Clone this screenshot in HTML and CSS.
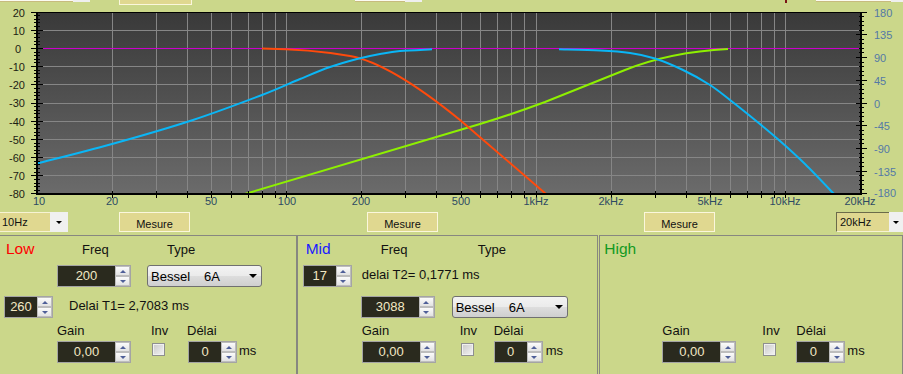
FILE: index.html
```html
<!DOCTYPE html>
<html lang="fr">
<head>
  <meta charset="UTF-8">
  <title>Filtres - courbes</title>
  <link rel="stylesheet" href="styles.css">
</head>
<body>
  <!-- bas des controles de la ligne du dessus (coupes par la fenetre) -->
  <div class="cutoff">
    <div class="cut-combo first"><span class="cut-text"></span><span class="cut-btn"></span></div>
    <div class="cut-button"></div>
    <div class="cut-combo second"><span class="cut-text"></span><span class="cut-btn"></span></div>
    <div class="cut-mark"></div>
    <div class="cut-combo third"><span class="cut-text"></span><span class="cut-btn"></span></div>
  </div>

  <svg class="chart" width="903" height="204" viewBox="0 8 903 204">
    <defs>
      <linearGradient id="plotbg" x1="0" y1="0" x2="0" y2="1">
        <stop offset="0" stop-color="#393939"/>
        <stop offset="1" stop-color="#6b6b6b"/>
      </linearGradient>
    </defs>
    <rect x="37" y="12" width="824" height="182" fill="url(#plotbg)"/>

    <path class="grid" d="M37 30.5H861M37 66.5H861M37 84.5H861M37 103.5H861M37 121.5H861M37 139.5H861M37 157.5H861M37 175.5H861"/>
    <path class="grid" d="M112.5 12V194M156.5 12V194M187.5 12V194M211.5 12V194M231.5 12V194M248.5 12V194M262.5 12V194M275.5 12V194M286.5 12V194M361.5 12V194M405.5 12V194M436.5 12V194M461.5 12V194M480.5 12V194M497.5 12V194M511.5 12V194M524.5 12V194M536.5 12V194M611.5 12V194M655.5 12V194M686.5 12V194M710.5 12V194M730.5 12V194M747.5 12V194M761.5 12V194M774.5 12V194M785.5 12V194"/>
    <path class="zero" d="M37 48.5H861"/>

    <!-- courbes -->
    <path class="curve green" d="M245 194L480 124Q510 115 545 102L625 70Q670 52 728 49"/>
    <path class="curve red" d="M262 48.5Q310 49 350 56T460 120L546 194"/>
    <path class="curve blue" d="M37 163.5C49.5 160.3 86 151.3 112 144C138 136.8 168 128.2 193 120C218 111.8 244.2 101.8 262 95C279.8 88.2 288.7 83.7 300 79C311.3 74.3 320.5 70.3 330 67C339.5 63.7 348.7 61.2 357 59C365.3 56.8 372.8 55.3 380 54C387.2 52.7 391.3 51.8 400 51C408.7 50.2 426.7 49.6 432 49.3"/>
    <path class="curve blue" d="M559 49.3C565.8 49.5 588.2 49.9 600 50.5C611.8 51.1 620.8 51.7 630 53C639.2 54.3 646.2 55.7 655 58.5C663.8 61.3 673.8 65.6 683 70C692.2 74.4 702.2 80 710 85C717.8 90 722.5 94.2 730 100C737.5 105.8 746.7 113.2 755 120C763.3 126.8 771.7 133.7 780 141C788.3 148.3 796 155.2 805 164C814 172.8 829.2 189 834 194"/>

    <!-- axes -->
    <path class="axis" d="M37 12.5H861"/>
    <rect x="36" y="12" width="2" height="183" fill="#000"/>
    <rect x="860" y="12" width="2" height="183" fill="#000"/>
    <rect x="36" y="193" width="826" height="2" fill="#000"/>
    <path class="axis" d="M34 15.5h6M34 19.5h6M34 22.5h6M34 26.5h6M34 33.5h6M34 37.5h6M34 41.5h6M34 44.5h6M34 52.5h6M34 55.5h6M34 59.5h6M34 62.5h6M34 70.5h6M34 73.5h6M34 77.5h6M34 81.5h6M34 88.5h6M34 92.5h6M34 95.5h6M34 99.5h6M34 106.5h6M34 110.5h6M34 113.5h6M34 117.5h6M34 124.5h6M34 128.5h6M34 132.5h6M34 135.5h6M34 143.5h6M34 146.5h6M34 150.5h6M34 153.5h6M34 161.5h6M34 164.5h6M34 168.5h6M34 172.5h6M34 179.5h6M34 183.5h6M34 186.5h6M34 190.5h6"/>
    <path class="axis" d="M31 12.5h12M31 30.5h12M31 48.5h12M31 66.5h12M31 84.5h12M31 103.5h12M31 121.5h12M31 139.5h12M31 157.5h12M31 175.5h12M31 193.5h12"/>
    <path class="axis" d="M859 16.5h5M859 21.5h5M859 25.5h5M859 30.5h5M859 39.5h5M859 43.5h5M859 48.5h5M859 52.5h5M859 62.5h5M859 66.5h5M859 71.5h5M859 75.5h5M859 84.5h5M859 89.5h5M859 93.5h5M859 98.5h5M859 107.5h5M859 112.5h5M859 116.5h5M859 121.5h5M859 130.5h5M859 134.5h5M859 139.5h5M859 143.5h5M859 153.5h5M859 157.5h5M859 162.5h5M859 166.5h5M859 175.5h5M859 180.5h5M859 184.5h5M859 189.5h5"/>
    <path class="axis" d="M856 12.5h11M856 34.5h11M856 57.5h11M856 80.5h11M856 103.5h11M856 125.5h11M856 148.5h11M856 171.5h11M856 193.5h11"/>
    <path class="axis" d="M112.5 191V198M156.5 191V198M187.5 191V198M211.5 191V198M231.5 191V198M248.5 191V198M262.5 191V198M275.5 191V198M286.5 191V198M361.5 191V198M405.5 191V198M436.5 191V198M461.5 191V198M480.5 191V198M497.5 191V198M511.5 191V198M524.5 191V198M536.5 191V198M611.5 191V198M655.5 191V198M686.5 191V198M710.5 191V198M730.5 191V198M747.5 191V198M761.5 191V198M774.5 191V198M785.5 191V198"/>

    <!-- graduations dB -->
    <text class="ylab" x="25" y="16.5">20</text>
    <text class="ylab" x="25" y="34.5">10</text>
    <text class="ylab" x="21" y="52.5">0</text>
    <text class="ylab" x="25" y="70.5">-10</text>
    <text class="ylab" x="25" y="89">-20</text>
    <text class="ylab" x="25" y="107">-30</text>
    <text class="ylab" x="25" y="125.5">-40</text>
    <text class="ylab" x="25" y="143.5">-50</text>
    <text class="ylab" x="25" y="161.5">-60</text>
    <text class="ylab" x="25" y="180">-70</text>
    <text class="ylab" x="25" y="197.5">-80</text>

    <!-- graduations phase -->
    <text class="plab" x="874" y="16.5">180</text>
    <text class="plab" x="874" y="39">135</text>
    <text class="plab" x="874" y="62">90</text>
    <text class="plab" x="874" y="84.5">45</text>
    <text class="plab" x="874" y="107.5">0</text>
    <text class="plab" x="874" y="130">-45</text>
    <text class="plab" x="874" y="153">-90</text>
    <text class="plab" x="874" y="175.5">-135</text>
    <text class="plab" x="874" y="197">-180</text>

    <!-- frequences -->
    <text class="xlab" x="39" y="205">10</text>
    <text class="xlab" x="112" y="205">20</text>
    <text class="xlab" x="211" y="205">50</text>
    <text class="xlab" x="287" y="205">100</text>
    <text class="xlab" x="361" y="205">200</text>
    <text class="xlab" x="461" y="205">500</text>
    <text class="xlab" x="536" y="205">1kHz</text>
    <text class="xlab" x="611" y="205">2kHz</text>
    <text class="xlab" x="710" y="205">5kHz</text>
    <text class="xlab" x="785" y="205">10kHz</text>
    <text class="xlab" x="860" y="205">20kHz</text>
  </svg>

  <div class="toolbar">
    <div class="range min"><span class="range-text">10Hz</span><span class="range-btn"></span></div>
    <div class="mesure m1">Mesure</div>
    <div class="mesure m2">Mesure</div>
    <div class="mesure m3">Mesure</div>
    <div class="range max"><span class="range-text">20kHz</span><span class="range-btn"></span></div>
  </div>

  <div class="panels">
    <div class="panel low">
      <div class="row r1">
        <span class="title">Low</span>
        <span>Freq</span>
        <span>Type</span>
      </div>
      <div class="row r2">
        <div class="spin wide"><span class="val">200</span><span class="arrows"><i class="up"></i><i class="down"></i></span></div>
        <div class="select"><span>Bessel</span><span class="order">6A</span></div>
      </div>
      <div class="row r3">
        <div class="spin narrow"><span class="val">260</span><span class="arrows"><i class="up"></i><i class="down"></i></span></div>
        <span class="info">Delai T1= 2,7083 ms</span>
      </div>
      <div class="row r4">
        <span>Gain</span>
        <span>Inv</span>
        <span>Délai</span>
      </div>
      <div class="row r5">
        <div class="spin wide"><span class="val">0,00</span><span class="arrows"><i class="up"></i><i class="down"></i></span></div>
        <span class="check"></span>
        <div class="spin narrow"><span class="val">0</span><span class="arrows"><i class="up"></i><i class="down"></i></span></div>
        <span class="unit">ms</span>
      </div>
    </div>

    <div class="panel mid">
      <div class="row r1">
        <span class="title">Mid</span>
        <span>Freq</span>
        <span>Type</span>
      </div>
      <div class="row r2">
        <div class="spin narrow"><span class="val">17</span><span class="arrows"><i class="up"></i><i class="down"></i></span></div>
        <span class="info">delai T2= 0,1771 ms</span>
      </div>
      <div class="row r3">
        <div class="spin wide"><span class="val">3088</span><span class="arrows"><i class="up"></i><i class="down"></i></span></div>
        <div class="select"><span>Bessel</span><span class="order">6A</span></div>
      </div>
      <div class="row r4">
        <span>Gain</span>
        <span>Inv</span>
        <span>Délai</span>
      </div>
      <div class="row r5">
        <div class="spin wide"><span class="val">0,00</span><span class="arrows"><i class="up"></i><i class="down"></i></span></div>
        <span class="check"></span>
        <div class="spin narrow"><span class="val">0</span><span class="arrows"><i class="up"></i><i class="down"></i></span></div>
        <span class="unit">ms</span>
      </div>
    </div>

    <div class="panel high">
      <div class="row r1">
        <span class="title">High</span>
      </div>
      <div class="row r2"></div>
      <div class="row r3"></div>
      <div class="row r4">
        <span>Gain</span>
        <span>Inv</span>
        <span>Délai</span>
      </div>
      <div class="row r5">
        <div class="spin wide"><span class="val">0,00</span><span class="arrows"><i class="up"></i><i class="down"></i></span></div>
        <span class="check"></span>
        <div class="spin narrow"><span class="val">0</span><span class="arrows"><i class="up"></i><i class="down"></i></span></div>
        <span class="unit">ms</span>
      </div>
    </div>
  </div>
</body>
</html>
```

FILE: styles.css
```css
body {
  margin: 0;
  width: 903px;
  height: 374px;
  overflow: hidden;
  background-color: #cbd78a;
  font-family: 'Liberation Sans', Arial, sans-serif;
  color: #111;
}

/* ligne du dessus, coupee */
.cutoff {
  display: flex;
  align-items: flex-start;
  height: 8px;
}

.cut-combo {
  display: flex;
}

.cut-text {
  height: 1px;
  background-color: #fbfbf2;
  border-bottom: 1px solid #c7bb7e;
}

.cut-btn {
  width: 17px;
  height: 2px;
  background-color: #efefef;
}

.cut-combo.first .cut-text { width: 73px; }
.cut-combo.second { margin-left: 163px; }
.cut-combo.second .cut-text { width: 50px; }
.cut-combo.third { margin-left: 29px; }
.cut-combo.third .cut-text { width: 75px; }
.cut-combo.third .cut-btn { width: 12px; }

.cut-button {
  margin-left: 29px;
  width: 73px;
  height: 5px;
  box-sizing: border-box;
  background-color: #e0d890;
  border: 1px solid #fbf7dc;
  border-top: none;
}

.cut-mark {
  margin-left: 363px;
  width: 2px;
  height: 3px;
  background-color: #7a1414;
}

/* graphique */
.chart {
  display: block;
}

.chart .grid {
  stroke: #868686;
  stroke-width: 1;
  fill: none;
  shape-rendering: crispEdges;
}

.chart .zero {
  stroke: #cc00cc;
  stroke-width: 1;
  shape-rendering: crispEdges;
}

.chart .axis {
  stroke: #000;
  stroke-width: 1;
  fill: none;
  shape-rendering: crispEdges;
}

.chart .curve {
  fill: none;
  stroke-width: 2;
  stroke-linejoin: round;
}

.chart .blue { stroke: #0ab6f6; }
.chart .red { stroke: #ff4a0c; }
.chart .green { stroke: #8ef000; }

.chart text {
  font-family: 'Liberation Sans', Arial, sans-serif;
  font-size: 11px;
}

.chart .ylab {
  fill: #1c1c14;
  text-anchor: end;
}

.chart .plab {
  fill: #5479a6;
}

.chart .xlab {
  fill: #2d4a63;
  text-anchor: middle;
}

/* barre Mesure */
.toolbar {
  display: flex;
  height: 20px;
}

.range {
  display: flex;
  height: 20px;
}

.range-text {
  box-sizing: border-box;
  height: 20px;
  padding-left: 2px;
  background-color: #e0d890;
  border-top: 1px solid #f7f3d3;
  border-bottom: 1px solid #f7f3d3;
  font-size: 11px;
  line-height: 18px;
}

.range-btn {
  width: 18px;
  display: flex;
  align-items: center;
  justify-content: center;
  background-color: #f0f0f0;
}

.range-btn::after {
  content: '';
  border-left: 3px solid transparent;
  border-right: 3px solid transparent;
  border-top: 3px solid #000;
}

.range.min .range-text { width: 50px; }

.range.max {
  margin-left: 121px;
}

.range.max .range-text {
  width: 53px;
  padding-left: 3px;
  border-left: 1px solid #6b6b4a;
  border-top-color: #6b6b4a;
}

.range.max .range-btn { width: 14px; }

.mesure {
  width: 72px;
  height: 20px;
  box-sizing: border-box;
  background-color: #e0d890;
  border: 1px solid #fbf7dc;
  font-size: 11px;
  line-height: 22px;
  text-align: center;
  overflow: hidden;
}

.mesure.m1 { margin-left: 51px; }
.mesure.m2 { margin-left: 177px; }
.mesure.m3 { margin-left: 206px; }

/* panneaux */
.panels {
  display: flex;
  margin-top: 3px;
  margin-left: -1px;
}

.panel {
  box-sizing: border-box;
  height: 150px;
  border: 1px solid #878780;
  border-bottom: none;
  font-size: 13px;
}

.panel.low { width: 299px; }
.panel.mid { width: 303px; }
.panel.high { width: 305px; margin-left: 1px; }

.row {
  display: grid;
  grid-auto-flow: column;
  justify-content: start;
  justify-items: start;
}

.r1 {
  margin-top: 1px;
  height: 24px;
  line-height: 24px;
  align-items: baseline;
}

.r2 { margin-top: 4px; height: 22px; }
.r3 { margin-top: 9px; height: 22px; }

.r4 {
  margin-top: 5px;
  height: 15px;
  line-height: 15px;
}

.r5 { margin-top: 3px; height: 22px; }

.title {
  font-size: 15.5px;
}

.low .title { color: #ff0000; }
.mid .title { color: #1a1aff; }
.high .title { color: #129a22; }

.info {
  line-height: 19px;
}

.unit {
  line-height: 19px;
}

.low .r1 { padding-left: 6px; grid-template-columns: 76px 85px auto; }
.low .r2 { padding-left: 57px; grid-template-columns: 90px auto; }
.low .r3 { padding-left: 4px; grid-template-columns: 65px auto; }
.low .r4 { padding-left: 57px; grid-template-columns: 94px 36px auto; }
.low .r5 { padding-left: 57px; grid-template-columns: 95px 36px 51px auto; }

.mid .r1 { padding-left: 8px; grid-template-columns: 75px 97px auto; }
.mid .r2 { padding-left: 5px; grid-template-columns: 59px auto; }
.mid .r3 { padding-left: 63px; grid-template-columns: 91px auto; }
.mid .r4 { padding-left: 64px; grid-template-columns: 98px 34px auto; }
.mid .r5 { padding-left: 64px; grid-template-columns: 99px 33px 52px auto; }

.high .r1 { padding-left: 4px; }
.high .r4 { padding-left: 62px; grid-template-columns: 100px 34px auto; }
.high .r5 { padding-left: 62px; grid-template-columns: 101px 33px 51px auto; }

/* champs numeriques */
.spin {
  display: flex;
  height: 22px;
  box-sizing: border-box;
  border: 1px solid #a4a4a4;
  background-color: #2a2a1e;
}

.spin.wide { width: 74px; }
.spin.narrow { width: 49px; }

.spin .val {
  flex: 1;
  text-align: center;
  color: #f2e8c4;
  line-height: 20px;
}

.spin .arrows {
  width: 15px;
  display: flex;
  flex-direction: column;
  background-color: #f4f4f4;
}

.spin .arrows i {
  flex: 1;
  display: flex;
  align-items: center;
  justify-content: center;
  border: 1px solid #bdbdbd;
  background: linear-gradient(#fbfbfb, #e2e2e2);
}

.spin .up::after {
  content: '';
  border-left: 3px solid transparent;
  border-right: 3px solid transparent;
  border-bottom: 3px solid #4f5f98;
}

.spin .down::after {
  content: '';
  border-left: 3px solid transparent;
  border-right: 3px solid transparent;
  border-top: 3px solid #4f5f98;
}

/* liste Bessel */
.select {
  display: flex;
  align-items: center;
  width: 115px;
  height: 22px;
  box-sizing: border-box;
  padding-left: 3px;
  border: 1px solid #707070;
  border-radius: 3px;
  background: linear-gradient(#f3f3f3, #ebebeb 48%, #dddddd 52%, #cfcfcf);
  color: #000;
}

.mid .select { width: 116px; }

.select .order {
  margin-left: 14px;
}

.select::after {
  content: '';
  margin-left: auto;
  margin-right: 4px;
  border-left: 4px solid transparent;
  border-right: 4px solid transparent;
  border-top: 4px solid #000;
}

/* case Inv */
.check {
  width: 13px;
  height: 13px;
  margin-top: 2px;
  box-sizing: border-box;
  border: 1px solid #8e8f8f;
  background: linear-gradient(135deg, #c9c9c9, #f4f4f4);
  box-shadow: inset 0 0 0 1px #f0f0f0;
}
```
